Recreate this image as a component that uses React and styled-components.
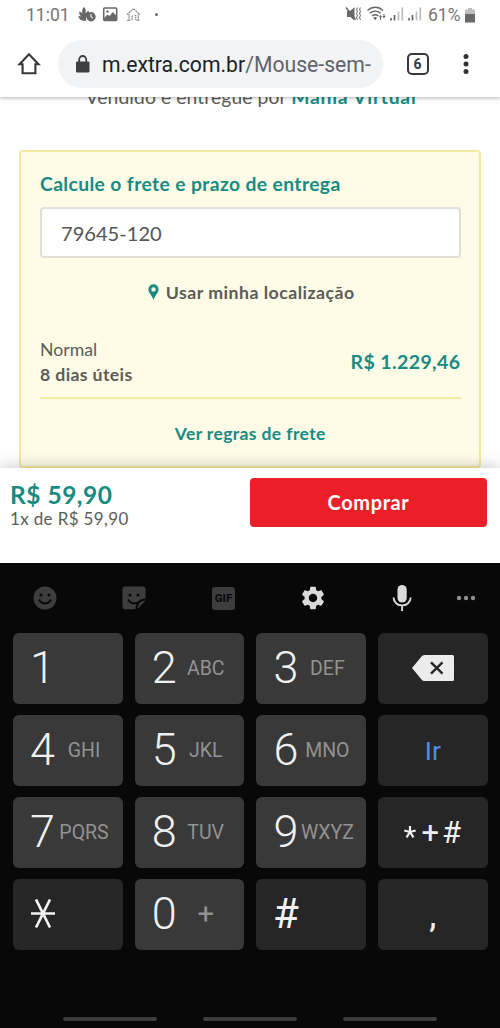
import React from "react";
import styled, { createGlobalStyle, css } from "styled-components";

const keys = [
  { main: "1" },
  { main: "2", sub: "ABC" },
  { main: "3", sub: "DEF" },
  { action: "delete" },
  { main: "4", sub: "GHI" },
  { main: "5", sub: "JKL" },
  { main: "6", sub: "MNO" },
  { action: "go" },
  { main: "7", sub: "PQRS" },
  { main: "8", sub: "TUV" },
  { main: "9", sub: "WXYZ" },
  { action: "symbols" },
  { action: "star" },
  { main: "0", sub: "+" },
  { main: "#", dark: true },
  { action: "comma" },
];

const StatusBar = () => (
  <StatusWrapper>
    <StatusGroup>
      <StatusText $width={51}>11:01</StatusText>
      {/* flame with clock, picture, dotted house */}
      <svg width="64" height="20" viewBox="77 5 64 20" fill="none">
        <path
          d="M84 7c2 2 2.200 4 1.300 6 1.500-.4 2.300-1.500 2.700-2.700 1 1.500 1.200 2.800.6 4.200a5.500 5.500 0 0 0-2.300 6.300c-4 .8-7.800-1.500-8-5.300 1 .8 2 1 3 .8-2-1-2.600-3-1.600-5.500.6 1.300 1.500 2 2.600 2.200-.5-2.300 0-4.200 1.700-6z"
          fill="#686868"
        />
        <circle cx="91" cy="16.700" r="4.700" fill="#686868" />
        <path d="M91 14v3l2 1.200" stroke="#fff" strokeWidth="1" />
        <rect x="103.700" y="8" width="13" height="12.500" rx="1" stroke="#686868" strokeWidth="1.600" />
        <path d="M104 18l3.500-3.500 2 1.500 3.500-4 3.500 4v4.500H104z" fill="#686868" />
        <circle cx="107.500" cy="11.500" r="1.200" fill="#686868" />
        <path
          d="M127 14.500l6.500-5.800 6.500 5.800M129 14v6.200M138.300 14v6.200M127 20.300h3.500M136.500 20.300h3M132 20v-4.300h1M134.500 15.700h1.200V20"
          stroke="#909090"
          strokeWidth="1.200"
          strokeDasharray="1.800 0.500"
        />
      </svg>
      <MoreDot />
    </StatusGroup>
    <StatusGroup>
      <svg width="77" height="20" viewBox="345 5 77 20" fill="none">
        <path d="M347 11h3l4.500-3.800v13.600L350.500 17H347z" fill="#686868" />
        <path d="M346 7.500l9.500 12" stroke="#686868" strokeWidth="1.500" />
        <path
          d="M357.500 7.500l-1 2 1 2-1 2 1 2-1 2 1 2.500M360.500 7.500l-1 2 1 2-1 2 1 2-1 2 1 2.500"
          stroke="#7c7c7c"
          strokeWidth="1.100"
        />
        <path
          d="M367.500 10.500c4.700-4.200 11-4.200 15.500 0M369.700 13.300c3.300-2.900 7.800-2.900 11 0M372 16c2-1.700 4.500-1.700 6.400 0"
          stroke="#686868"
          strokeWidth="1.500"
        />
        <path d="M373.300 17.800c1.100-1 2.600-1 3.700 0l-1.800 2.500z" fill="#686868" />
        <path d="M380.500 14.700l1.700 2.600h-3.400zM384 18.600l-1.700-2.600h3.400z" fill="#686868" />
        <path d="M380.500 16v4M384 14v3" stroke="#686868" />
        <path d="M391 20.500v-2.500M394.500 20.500v-5.500M409 20.500v-2.500M412.500 20.500v-5.500" stroke="#686868" strokeWidth="1.700" />
        <path d="M398.500 20.500v-9M402.300 20.500v-13M416.500 20.500v-9M420.300 20.500v-13" stroke="#bdbdbd" strokeWidth="1.700" />
      </svg>
      <StatusText $width={37}>61%</StatusText>
      <svg width="10" height="15" viewBox="0 0 10 15">
        <path d="M3 0h4v1.500h3V6H0V1.500h3z" fill="#bdbdbd" />
        <path d="M0 6h10v8.500H0z" fill="#686868" />
      </svg>
    </StatusGroup>
  </StatusWrapper>
);

const BrowserBar = () => (
  <BrowserWrapper>
    <svg width="24" height="24" viewBox="17.300 51.800 24 24" fill="none">
      <path d="M22.900 64h-3.100l9.500-10 9.500 10h-3.100v9H22.900z" stroke="#36383b" strokeWidth="2.100" />
    </svg>
    <AddressBar>
      <svg width="14" height="18" viewBox="0 0 14 18" fill="none">
        <rect x="0" y="6.500" width="13.500" height="11" rx="1.300" fill="#3c4043" />
        <path d="M3.200 7V4.500a3.500 3.500 0 0 1 7 0V7" stroke="#3c4043" strokeWidth="1.800" />
      </svg>
      <Url>
        m.extra.com.br<span>/Mouse-sem-</span>
      </Url>
    </AddressBar>
    <TabCount>6</TabCount>
    <svg width="6" height="22" viewBox="0 0 6 22" fill="#303235">
      <circle cx="3" cy="3.500" r="2.500" />
      <circle cx="3" cy="11" r="2.500" />
      <circle cx="3" cy="18.500" r="2.500" />
    </svg>
  </BrowserWrapper>
);

const Shipping = () => (
  <ShippingCard>
    <CardTitle>Calcule o frete e prazo de entrega</CardTitle>
    <ZipInput defaultValue="79645-120" />
    <LocationButton>
      <svg width="11" height="16" viewBox="0 0 11 16">
        <path
          fillRule="evenodd"
          fill="#178b83"
          d="M5.500 0.300A5.100 5.100 0 0 0 .4 5.400C.4 8.500 3.700 11 5.500 15.700 7.300 11 10.600 8.500 10.600 5.400A5.100 5.100 0 0 0 5.500.3zm0 2.900a2.200 2.200 0 1 1 0 4.400 2.200 2.200 0 0 1 0-4.400z"
        />
      </svg>
      <span>Usar minha localização</span>
    </LocationButton>
    <Quote>
      <div>
        <QuoteName>Normal</QuoteName>
        <QuoteTime>8 dias úteis</QuoteTime>
      </div>
      <QuotePrice>R$ 1.229,46</QuotePrice>
    </Quote>
    <RulesLink>Ver regras de frete</RulesLink>
  </ShippingCard>
);

const KeyboardTools = () => (
  <Tools>
    <svg width="24" height="24" viewBox="0 0 24 24">
      <circle cx="12" cy="12" r="11.500" fill="#3d3d3d" />
      <circle cx="8" cy="9" r="1.500" fill="#080808" />
      <circle cx="16" cy="9" r="1.500" fill="#080808" />
      <path d="M6 13.500c2.500 5.200 9.500 5.200 12 0" fill="none" stroke="#080808" strokeWidth="1.800" />
    </svg>
    <svg width="24" height="24" viewBox="0 0 24 24">
      <path d="M3 .5h18a2.500 2.500 0 0 1 2.500 2.500v9.500c-6 0-10 4-10 10.800H3A2.500 2.500 0 0 1 .5 21V3A2.500 2.500 0 0 1 3 .500z" fill="#3d3d3d" />
      <path d="M15.500 23c.2-5 3-8 8-8.500z" fill="#3d3d3d" />
      <circle cx="8" cy="9" r="1.500" fill="#080808" />
      <circle cx="16" cy="9" r="1.500" fill="#080808" />
      <path d="M6 13.500c2 4 6.500 4.800 9.500 2.800" fill="none" stroke="#080808" strokeWidth="1.700" />
    </svg>
    <GifBadge>GIF</GifBadge>
    <svg width="28" height="28" viewBox="0 0 24 24">
      <path
        fill="#dadada"
        d="M19.140 12.940c.04-.3.060-.61.060-.94 0-.32-.02-.64-.07-.94l2.030-1.580c.18-.14.230-.41.120-.61l-1.920-3.320c-.12-.22-.37-.29-.59-.22l-2.390.96c-.5-.38-1.030-.7-1.620-.94l-.36-2.540c-.04-.24-.24-.41-.48-.41h-3.840c-.24 0-.43.170-.47.410l-.36 2.540c-.59.240-1.130.570-1.620.940l-2.390-.96c-.22-.08-.47 0-.59.220L2.740 8.870c-.12.210-.08.470.120.610l2.030 1.580c-.05.300-.09.630-.09.940s.02.640.07.940l-2.030 1.580c-.18.140-.23.410-.12.610l1.920 3.320c.12.220.37.290.59.220l2.390-.96c.5.380 1.030.700 1.620.940l.36 2.540c.05.240.240.410.480.410h3.840c.24 0 .44-.17.470-.41l.36-2.540c.59-.24 1.130-.56 1.620-.94l2.390.96c.22.080.470 0 .59-.22l1.920-3.320c.12-.22.070-.47-.12-.61l-2.010-1.580zM12 15.600c-1.980 0-3.600-1.620-3.600-3.600s1.620-3.600 3.600-3.600 3.600 1.620 3.600 3.600-1.620 3.600-3.600 3.600z"
      />
    </svg>
    <svg width="20" height="28" viewBox="0 0 20 28">
      <rect x="5.500" y="1" width="9.200" height="17.500" rx="4.600" fill="#dadada" />
      <path d="M1.500 13.500c.5 10.500 16.700 10.500 17.200 0M10.100 21v6" fill="none" stroke="#dadada" strokeWidth="1.900" />
    </svg>
    <svg width="20" height="6" viewBox="0 0 20 6" fill="#8f8f8f">
      <circle cx="3" cy="3" r="2.200" />
      <circle cx="10" cy="3" r="2.200" />
      <circle cx="17" cy="3" r="2.200" />
    </svg>
  </Tools>
);

const ActionKey = ({ action }) => (
  <Key $dark $center={action !== "star"}>
    {action === "delete" && (
      <svg width="42" height="26" viewBox="0 0 42 26">
        <path d="M0 13L9.500 1.500Q10.700 0 12.500 0H40.500Q42 0 42 1.500V24.500Q42 26 40.500 26H12.500Q10.700 26 9.500 24.500z" fill="#ececec" />
        <path d="M19 7.300l11.500 11.400M30.500 7.300L19 18.700" stroke="#262626" strokeWidth="2.400" />
      </svg>
    )}
    {action === "go" && <GoLabel>Ir</GoLabel>}
    {action === "symbols" && (
      <SymbolLabel>
        <svg width="12" height="12" viewBox="0 0 12 12" fill="none">
          <path d="M6 0v6M.3 4.500L6 6M11.700 4.500L6 6M2.500 11.300L6 6M9.500 11.300L6 6" stroke="#f0f0f0" strokeWidth="2.200" />
        </svg>
        <span>+</span>
        <span>#</span>
      </SymbolLabel>
    )}
    {action === "star" && (
      <svg width="24" height="30" viewBox="0 0 24 30" fill="none">
        <path d="M0 14.500h24M5 .5l14 28M19 .5L5 28.500" stroke="#f2f2f2" strokeWidth="2.700" />
      </svg>
    )}
    {action === "comma" && <CommaLabel>,</CommaLabel>}
  </Key>
);

const Keyboard = () => (
  <KeyboardWrapper>
    <KeyboardTools />
    <KeyGrid>
      {keys.map((key, i) =>
        key.action ? (
          <ActionKey key={`key-${i}`} action={key.action} />
        ) : (
          <Key key={`key-${i}`} $dark={key.dark}>
            <Digit $bold={key.dark}>{key.main}</Digit>
            {key.sub && <Letters $plus={key.sub === "+"}>{key.sub}</Letters>}
          </Key>
        )
      )}
    </KeyGrid>
    <NavBar>
      <NavHandle />
      <NavHandle />
      <NavHandle />
    </NavBar>
  </KeyboardWrapper>
);

const App = () => (
  <>
    <GlobalStyle />
    <Screen>
      <StatusBar />
      <BrowserBar />
      <Page>
        <Seller>
          Vendido e entregue por <b>Mania Virtual</b>
        </Seller>
        <Shipping />
      </Page>
      <BuyBar>
        <div>
          <Price>R$ 59,90</Price>
          <Installments>1x de R$ 59,90</Installments>
        </div>
        <BuyButton>Comprar</BuyButton>
      </BuyBar>
      <Keyboard />
    </Screen>
  </>
);

const GlobalStyle = createGlobalStyle`
  * {
    box-sizing: border-box;
  }
  body {
    margin: 0;
    background: #fff;
  }
  svg {
    display: block;
    flex-shrink: 0;
  }
`;

const Screen = styled.div`
  display: flex;
  flex-direction: column;
  width: 500px;
  height: 1028px;
  overflow: hidden;
  background: #fff;
  font-family: Lato, "Open Sans", sans-serif;
  color: #5c5c58;
`;
const StatusWrapper = styled.div`
  display: flex;
  justify-content: space-between;
  height: 30px;
  padding: 0 25px 0 26px;
  position: relative;
  z-index: 3;
  background: #fff;
  font-family: Roboto, sans-serif;
`;
const StatusGroup = styled.div`
  display: flex;
  align-items: center;
`;
const StatusText = styled.span`
  width: ${(props) => props.$width}px;
  font-size: 17.500px;
  color: #757575;
  white-space: nowrap;

  svg + & {
    margin-left: 6px;
  }
`;
const MoreDot = styled.i`
  width: 3px;
  height: 3px;
  margin: 0 0 2px 14px;
  border-radius: 50%;
  background: #686868;
`;
const BrowserWrapper = styled.div`
  display: flex;
  align-items: center;
  height: 67px;
  padding: 0 31px 0 17px;
  position: relative;
  z-index: 2;
  background: #fff;
  box-shadow: 0 1px 4px rgba(0, 0, 0, 0.3);
`;
const AddressBar = styled.div`
  display: flex;
  align-items: center;
  gap: 12px;
  width: 325px;
  height: 48px;
  margin-left: 17px;
  padding-left: 18px;
  border-radius: 24px;
  background: #f1f3f4;
  overflow: hidden;
`;
const Url = styled.span`
  padding-top: 1px;
  font-family: Roboto, sans-serif;
  font-size: 21.200px;
  color: #202124;
  white-space: nowrap;

  span {
    color: #606469;
  }
`;
const TabCount = styled.div`
  display: flex;
  align-items: center;
  justify-content: center;
  width: 22px;
  height: 22px;
  margin: 0 34.500px 0 24px;
  border: 2.300px solid #36383b;
  border-radius: 5px;
  font: 700 14px Roboto, sans-serif;
  color: #36383b;
`;
const Page = styled.main`
  display: flex;
  flex-direction: column;
  height: 371px;
  padding: 0 19px;
  overflow: hidden;
`;
const Seller = styled.p`
  height: 24px;
  margin: -12px 0 41px;
  padding-left: 2px;
  font-size: 19.300px;
  line-height: 24px;
  letter-spacing: 0.1px;
  text-align: center;
  white-space: nowrap;

  b {
    letter-spacing: 0.75px;
    color: #178b83;
  }
`;
const ShippingCard = styled.section`
  display: flex;
  flex-direction: column;
  flex-shrink: 0;
  height: 318px;
  padding: 19px 18.500px 0 19px;
  border: 2px solid #f5e9a0;
  border-radius: 4px;
  background: #fefbe7;
`;
const CardTitle = styled.h2`
  height: 26px;
  margin: 0 0 10px;
  font-size: 19.300px;
  line-height: 26px;
  letter-spacing: 0.38px;
  color: #178b83;
  white-space: nowrap;
`;
const ZipInput = styled.input`
  height: 51px;
  padding: 0 19px;
  border: 2px solid #e2dfd8;
  border-radius: 4px;
  background: #fff;
  font-family: inherit;
  font-size: 20.100px;
  color: #555;
  outline: none;
`;
const LocationButton = styled.div`
  display: flex;
  align-items: center;
  justify-content: center;
  gap: 7px;
  height: 24px;
  margin-top: 22px;
  padding-left: 2px;
  font-size: 17.700px;
  font-weight: 700;
  letter-spacing: 0.48px;
`;
const Quote = styled.div`
  display: flex;
  justify-content: space-between;
  align-items: center;
  height: 73px;
  margin-top: 22px;
  padding-top: 1px;
  border-bottom: 2px solid #f5e9a0;
  line-height: 25px;
`;
const QuoteName = styled.div`
  font-size: 17.700px;
`;
const QuoteTime = styled.div`
  font-size: 17.700px;
  font-weight: 700;
  letter-spacing: 0.35px;
`;
const QuotePrice = styled.div`
  padding-bottom: 2px;
  font-size: 19.500px;
  font-weight: 700;
  letter-spacing: 0.4px;
  color: #178b83;
`;
const RulesLink = styled.div`
  margin-top: 23px;
  font-size: 17.500px;
  font-weight: 700;
  line-height: 24px;
  letter-spacing: 0.38px;
  text-align: center;
  color: #178b83;
`;
const BuyBar = styled.div`
  display: flex;
  justify-content: space-between;
  flex-shrink: 0;
  height: 95px;
  padding: 10px 13px 0 10px;
  position: relative;
  z-index: 1;
  background: #fff;
  box-shadow: 0 -2px 14px rgba(0, 0, 0, 0.2);
`;
const Price = styled.div`
  padding-top: 2px;
  font-size: 24.500px;
  font-weight: 700;
  line-height: 29px;
  letter-spacing: 0.5px;
  color: #178b83;
`;
const Installments = styled.div`
  font-size: 17px;
  line-height: 20px;
  letter-spacing: 0.35px;
`;
const BuyButton = styled.button`
  width: 237px;
  height: 49px;
  padding: 0 0 2px;
  border: none;
  border-radius: 4px;
  background: #ec1f28;
  font-family: inherit;
  font-size: 20px;
  font-weight: 700;
  letter-spacing: 0.6px;
  color: #fff;
`;
const KeyboardWrapper = styled.div`
  display: flex;
  flex-direction: column;
  flex: 1;
  position: relative;
  z-index: 2;
  background: #080808;
`;
const Tools = styled.div`
  display: grid;
  grid-template-columns: repeat(5, 89.400px) 1fr;
  align-items: center;
  justify-items: center;
  height: 70px;

  svg:last-child {
    margin-right: 15px;
  }
`;
const GifBadge = styled.div`
  width: 23px;
  height: 23px;
  border-radius: 3px;
  background: #3d3d3d;
  font: 700 11.500px/23px Roboto, sans-serif;
  text-align: center;
  color: #080808;
`;
const KeyGrid = styled.div`
  display: grid;
  grid-template-columns: repeat(4, 109.500px);
  grid-template-rows: repeat(4, 70.500px);
  gap: 11.500px 12.200px;
  padding-left: 13px;
`;
const Key = styled.div`
  display: grid;
  grid-template-columns: 25px 58px;
  align-items: center;
  justify-items: center;
  padding-left: 17px;
  border-radius: 6px;
  background: ${(props) => (props.$dark ? "#262626" : "#393939")};
  font-family: Roboto, sans-serif;

  ${(props) =>
    props.$center &&
    css`
      display: flex;
      justify-content: center;
      padding-left: 0;
    `}
`;
const Digit = styled.span`
  font-size: ${(props) => (props.$bold ? 42 : 45)}px;
  font-weight: ${(props) => (props.$bold ? 400 : 300)};
  line-height: 70px;
  color: #f0f0f0;
`;
const Letters = styled.span`
  font-size: ${(props) => (props.$plus ? 29 : 19.5)}px;
  color: #929292;
`;
const GoLabel = styled.span`
  font-size: 26.500px;
  color: #4c8fe8;
`;
const SymbolLabel = styled.span`
  display: flex;
  align-items: center;
  gap: 3px;
  font-size: 31px;
  color: #f0f0f0;

  svg {
    margin-right: 2px;
  }
`;
const CommaLabel = styled.span`
  padding-top: 2px;
  font-size: 36px;
  color: #f0f0f0;
`;
const NavBar = styled.div`
  display: flex;
  justify-content: space-between;
  margin-top: auto;
  padding: 0 63px 7px;
`;
const NavHandle = styled.div`
  width: 94px;
  height: 4px;
  border-radius: 2px;
  background: #3b3b3b;
`;

export default App;
